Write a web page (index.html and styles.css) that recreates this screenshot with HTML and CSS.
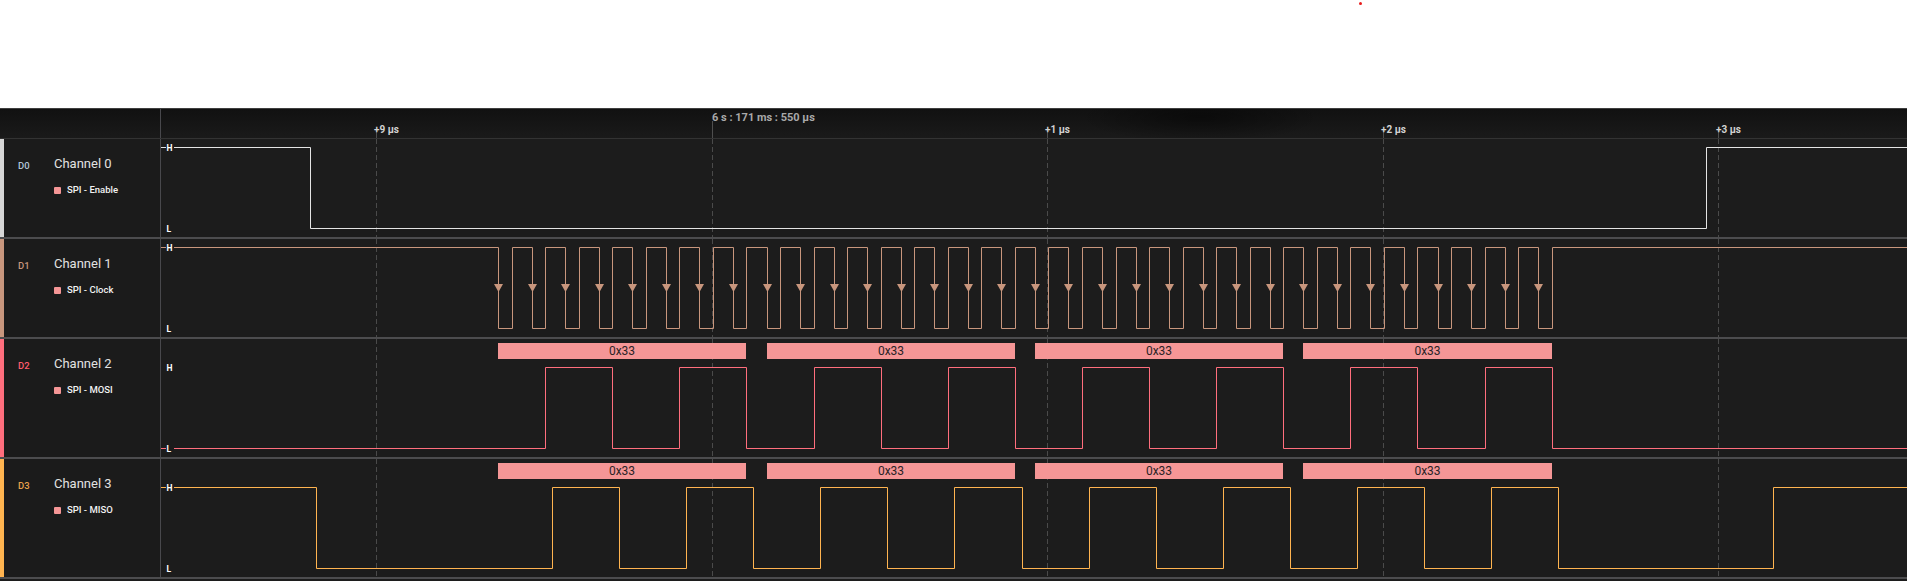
FILE: index.html
```html
<!DOCTYPE html>
<html lang="en">
<head>
<meta charset="utf-8">
<title>Logic capture</title>
<link rel="stylesheet" href="styles.css">
</head>
<body>
<div class="top"><span class="cursor-dot"></span></div>
<div class="viewer">
  <div class="ruler">
    <div class="ruler-left"></div>
    <div class="ruler-plot">
      <svg class="ruler-svg" width="1746" height="29">
        <line class="tick" x1="215.5" y1="23" x2="215.5" y2="29"/>
        <line class="tick" x1="551.5" y1="12" x2="551.5" y2="29"/>
        <line class="tick" x1="886.5" y1="23" x2="886.5" y2="29"/>
        <line class="tick" x1="1222.5" y1="23" x2="1222.5" y2="29"/>
        <line class="tick" x1="1557.5" y1="23" x2="1557.5" y2="29"/>
        <text class="marker" x="551" y="11.5">6 s : 171 ms : 550 µs</text>
        <text class="tlabel" x="213" y="23.5">+9 µs</text>
        <text class="tlabel" x="884" y="23.5">+1 µs</text>
        <text class="tlabel" x="1220" y="23.5">+2 µs</text>
        <text class="tlabel" x="1555" y="23.5">+3 µs</text>
      </svg>
    </div>
  </div>

  <div class="row">
    <div class="label c0">
      <span class="dn">D0</span>
      <div class="names">
        <div class="name">Channel 0</div>
        <div class="sub"><span class="bullet"></span>SPI - Enable</div>
      </div>
    </div>
    <div class="plot">
      <svg width="1746" height="98">
        <g class="grid">
          <line x1="215.5" y1="0" x2="215.5" y2="98"/>
          <line x1="551.5" y1="0" x2="551.5" y2="98"/>
          <line x1="886.5" y1="0" x2="886.5" y2="98"/>
          <line x1="1222.5" y1="0" x2="1222.5" y2="98"/>
          <line x1="1557.5" y1="0" x2="1557.5" y2="98"/>
        </g>
        <path class="wave w0" d="M0 8.5H149.5V89.5H1545.5V8.5H1746"/>
        <g class="lv">
          <rect x="5" y="4" width="8" height="9"/><text x="5.5" y="11.5">H</text>
          <rect x="5" y="85" width="8" height="9"/><text x="5.5" y="92.5">L</text>
        </g>
      </svg>
    </div>
  </div>

  <div class="row">
    <div class="label c1">
      <span class="dn">D1</span>
      <div class="names">
        <div class="name">Channel 1</div>
        <div class="sub"><span class="bullet"></span>SPI - Clock</div>
      </div>
    </div>
    <div class="plot">
      <svg width="1746" height="98">
        <defs><path id="arr" d="M-4.5 45H4.5L0 53Z"/></defs>
        <g class="grid">
          <line x1="215.5" y1="0" x2="215.5" y2="98"/>
          <line x1="551.5" y1="0" x2="551.5" y2="98"/>
          <line x1="886.5" y1="0" x2="886.5" y2="98"/>
          <line x1="1222.5" y1="0" x2="1222.5" y2="98"/>
          <line x1="1557.5" y1="0" x2="1557.5" y2="98"/>
        </g>
        <path class="wave w1" d="M0 8.5H337.5V89.5H351.5V8.5H371.5V89.5H384.5V8.5H404.5V89.5H418.5V8.5H438.5V89.5H451.5V8.5H471.5V89.5H485.5V8.5H505.5V89.5H518.5V8.5H538.5V89.5H552.5V8.5H572.5V89.5H585.5V8.5H606.5V89.5H619.5V8.5H639.5V89.5H653.5V8.5H673.5V89.5H686.5V8.5H706.5V89.5H720.5V8.5H740.5V89.5H753.5V8.5H773.5V89.5H787.5V8.5H807.5V89.5H820.5V8.5H840.5V89.5H854.5V8.5H874.5V89.5H887.5V8.5H907.5V89.5H921.5V8.5H941.5V89.5H955.5V8.5H975.5V89.5H988.5V8.5H1008.5V89.5H1022.5V8.5H1042.5V89.5H1055.5V8.5H1075.5V89.5H1089.5V8.5H1109.5V89.5H1122.5V8.5H1142.5V89.5H1156.5V8.5H1176.5V89.5H1189.5V8.5H1209.5V89.5H1223.5V8.5H1243.5V89.5H1256.5V8.5H1277.5V89.5H1290.5V8.5H1310.5V89.5H1324.5V8.5H1344.5V89.5H1357.5V8.5H1377.5V89.5H1391.5V8.5H1746"/>
        <g class="arrows">
          <use href="#arr" x="337.5"/><use href="#arr" x="371.5"/><use href="#arr" x="404.5"/><use href="#arr" x="438.5"/>
          <use href="#arr" x="471.5"/><use href="#arr" x="505.5"/><use href="#arr" x="538.5"/><use href="#arr" x="572.5"/>
          <use href="#arr" x="606.5"/><use href="#arr" x="639.5"/><use href="#arr" x="673.5"/><use href="#arr" x="706.5"/>
          <use href="#arr" x="740.5"/><use href="#arr" x="773.5"/><use href="#arr" x="807.5"/><use href="#arr" x="840.5"/>
          <use href="#arr" x="874.5"/><use href="#arr" x="907.5"/><use href="#arr" x="941.5"/><use href="#arr" x="975.5"/>
          <use href="#arr" x="1008.5"/><use href="#arr" x="1042.5"/><use href="#arr" x="1075.5"/><use href="#arr" x="1109.5"/>
          <use href="#arr" x="1142.5"/><use href="#arr" x="1176.5"/><use href="#arr" x="1209.5"/><use href="#arr" x="1243.5"/>
          <use href="#arr" x="1277.5"/><use href="#arr" x="1310.5"/><use href="#arr" x="1344.5"/><use href="#arr" x="1377.5"/>
        </g>
        <g class="lv">
          <rect x="5" y="4" width="8" height="9"/><text x="5.5" y="11.5">H</text>
          <rect x="5" y="85" width="8" height="9"/><text x="5.5" y="92.5">L</text>
        </g>
      </svg>
    </div>
  </div>

  <div class="row">
    <div class="label c2">
      <span class="dn">D2</span>
      <div class="names">
        <div class="name">Channel 2</div>
        <div class="sub"><span class="bullet"></span>SPI - MOSI</div>
      </div>
    </div>
    <div class="plot">
      <svg width="1746" height="118">
        <g class="grid">
          <line x1="215.5" y1="0" x2="215.5" y2="118"/>
          <line x1="551.5" y1="0" x2="551.5" y2="118"/>
          <line x1="886.5" y1="0" x2="886.5" y2="118"/>
          <line x1="1222.5" y1="0" x2="1222.5" y2="118"/>
          <line x1="1557.5" y1="0" x2="1557.5" y2="118"/>
        </g>
        <g class="frames">
          <rect x="337" y="4" width="248" height="16"/><text x="461" y="16">0x33</text>
          <rect x="606" y="4" width="248" height="16"/><text x="730" y="16">0x33</text>
          <rect x="874" y="4" width="248" height="16"/><text x="998" y="16">0x33</text>
          <rect x="1142" y="4" width="249" height="16"/><text x="1266.5" y="16">0x33</text>
        </g>
        <path class="wave w2" d="M0 109.5H384.5V28.5H451.5V109.5H518.5V28.5H585.5V109.5H653.5V28.5H720.5V109.5H787.5V28.5H854.5V109.5H921.5V28.5H988.5V109.5H1055.5V28.5H1122.5V109.5H1189.5V28.5H1256.5V109.5H1324.5V28.5H1391.5V109.5H1746"/>
        <g class="lv">
          <rect x="5" y="24" width="8" height="9"/><text x="5.5" y="31.5">H</text>
          <rect x="5" y="105" width="8" height="9"/><text x="5.5" y="112.5">L</text>
        </g>
      </svg>
    </div>
  </div>

  <div class="row">
    <div class="label c3">
      <span class="dn">D3</span>
      <div class="names">
        <div class="name">Channel 3</div>
        <div class="sub"><span class="bullet"></span>SPI - MISO</div>
      </div>
    </div>
    <div class="plot">
      <svg width="1746" height="118">
        <g class="grid">
          <line x1="215.5" y1="0" x2="215.5" y2="118"/>
          <line x1="551.5" y1="0" x2="551.5" y2="118"/>
          <line x1="886.5" y1="0" x2="886.5" y2="118"/>
          <line x1="1222.5" y1="0" x2="1222.5" y2="118"/>
          <line x1="1557.5" y1="0" x2="1557.5" y2="118"/>
        </g>
        <g class="frames">
          <rect x="337" y="4" width="248" height="16"/><text x="461" y="16">0x33</text>
          <rect x="606" y="4" width="248" height="16"/><text x="730" y="16">0x33</text>
          <rect x="874" y="4" width="248" height="16"/><text x="998" y="16">0x33</text>
          <rect x="1142" y="4" width="249" height="16"/><text x="1266.5" y="16">0x33</text>
        </g>
        <path class="wave w3" d="M0 28.5H155.5V109.5H391.5V28.5H458.5V109.5H525.5V28.5H592.5V109.5H659.5V28.5H726.5V109.5H793.5V28.5H861.5V109.5H928.5V28.5H995.5V109.5H1062.5V28.5H1129.5V109.5H1196.5V28.5H1263.5V109.5H1330.5V28.5H1397.5V109.5H1612.5V28.5H1746"/>
        <g class="lv">
          <rect x="5" y="24" width="8" height="9"/><text x="5.5" y="31.5">H</text>
          <rect x="5" y="105" width="8" height="9"/><text x="5.5" y="112.5">L</text>
        </g>
      </svg>
    </div>
  </div>
</div>
</body>
</html>
```
FILE: styles.css
```css
html, body {
  margin: 0;
  padding: 0;
}
body {
  background: #1c1c1c;
  font-family: Roboto, "Liberation Sans", sans-serif;
  overflow: hidden;
}
.top {
  height: 108px;
  background: #ffffff;
  position: relative;
}
.cursor-dot {
  position: absolute;
  left: 1359px;
  top: 2px;
  width: 3px;
  height: 3px;
  border-radius: 50%;
  background: #e81c1c;
}
.viewer {
  background: #1c1c1c;
}
.ruler {
  display: flex;
  height: 29px;
  border-top: 1px solid #3f3f3f;
  border-bottom: 1px solid #333333;
  background:
    radial-gradient(ellipse 120px 26px at 1200px 8px, rgba(0,0,0,0.45), rgba(0,0,0,0)),
    linear-gradient(#111111, #1a1a1a);
}
.ruler-left {
  width: 160px;
  flex: none;
  border-right: 1px solid #48484c;
}
.ruler-plot {
  flex: 1;
  overflow: hidden;
}
.ruler-svg {
  display: block;
}
.ruler-svg .tick {
  stroke: #4e4e4e;
  stroke-width: 1;
}
.ruler-svg .tlabel {
  font: 700 10px Roboto, "Liberation Sans", sans-serif;
  fill: #d2d2d2;
}
.ruler-svg .marker {
  font: 700 11px Roboto, "Liberation Sans", sans-serif;
  fill: #a9a9a9;
}
.row {
  display: flex;
  border-bottom: 2px solid #4c4c4e;
}
.label {
  width: 142px;
  flex: none;
  display: flex;
  padding-left: 14px;
  border-left: 4px solid #d8d8d8;
  border-right: 1px solid #48484c;
  background: #1b1b1b;
}
.label.c0 { border-left-color: #d6d6d6; }
.label.c1 { border-left-color: #c8967d; }
.label.c2 { border-left-color: #ff6e7d; }
.label.c3 { border-left-color: #ffb450; }
.dn {
  width: 36px;
  flex: none;
  margin-top: 21px;
  font-size: 9.5px;
  line-height: 12px;
  font-weight: 500;
}
.c0 .dn { color: #b3c6d8; }
.c1 .dn { color: #c8967d; }
.c2 .dn { color: #ff5c6e; }
.c3 .dn { color: #eaa24c; }
.names {
  margin-top: 17px;
}
.name {
  font-size: 13px;
  line-height: 16px;
  color: #e2e2e2;
}
.sub {
  margin-top: 12px;
  display: flex;
  align-items: center;
  gap: 6px;
  font-size: 9.5px;
  line-height: 12px;
  font-weight: 500;
  color: #f2f2f2;
}
.bullet {
  width: 7px;
  height: 7px;
  border-radius: 1px;
  background: #f59696;
}
.plot {
  flex: 1;
  overflow: hidden;
  background: #1c1c1c;
}
.plot svg {
  display: block;
}
.grid line {
  stroke: #4a4a4a;
  stroke-width: 1;
  stroke-dasharray: 5 3;
}
.wave {
  fill: none;
  stroke-width: 1;
}
.w0 { stroke: #e4e4e4; }
.w1 { stroke: #c8967d; }
.w2 { stroke: #ff6e7d; }
.w3 { stroke: #ffb450; }
.arrows use {
  fill: #c8967d;
}
.lv rect {
  fill: #1c1c1c;
}
.lv text {
  font: 700 8.5px Roboto, "Liberation Sans", sans-serif;
  fill: #ffffff;
}
.frames rect {
  fill: #f59696;
}
.frames text {
  font: 400 12px Roboto, "Liberation Sans", sans-serif;
  fill: #2b2326;
  text-anchor: middle;
}
```
